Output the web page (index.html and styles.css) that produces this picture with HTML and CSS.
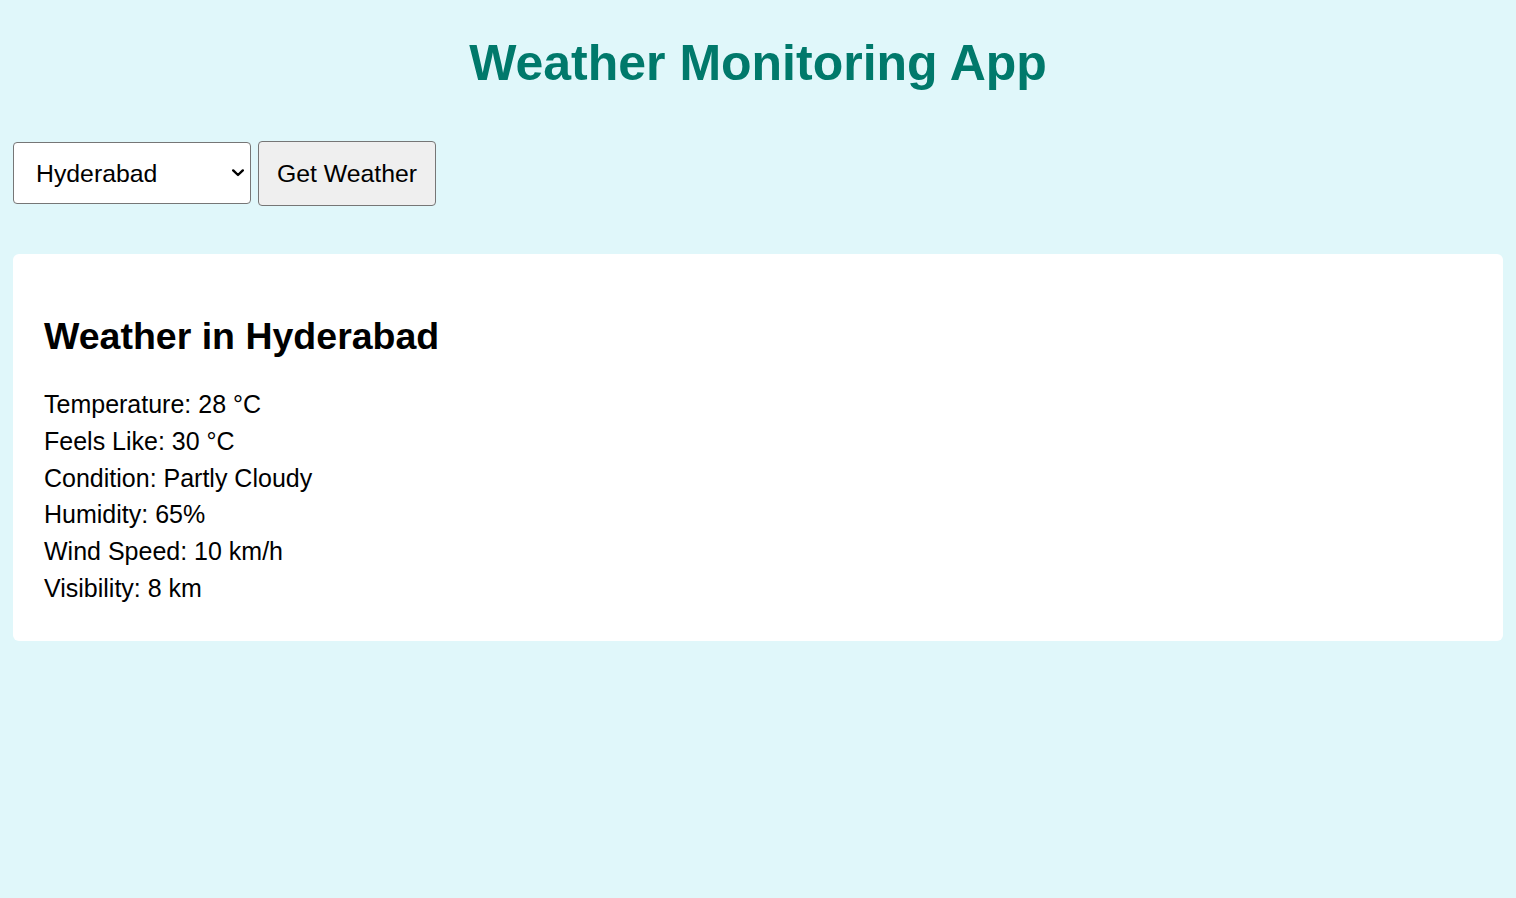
FILE: index.html
```html
<!DOCTYPE html>
<html lang="en">
<head>
<meta charset="utf-8">
<title>Weather Monitoring App</title>
<link rel="stylesheet" href="styles.css">
</head>
<body>
  <h1 class="title">Weather Monitoring App</h1>
  <div class="controls">
    <div class="select-wrap">
      <select class="city-select">
        <option selected>Hyderabad</option>
        <option>Delhi</option>
        <option>Mumbai</option>
        <option>Chennai</option>
        <option>Bangalore</option>
      </select>
      <svg class="chevron" width="12" height="8" viewBox="0 0 12 8" aria-hidden="true">
        <path d="M1.2 1.4 L6 6 L10.8 1.4" fill="none" stroke="#000" stroke-width="2.4" stroke-linecap="round" stroke-linejoin="round"/>
      </svg>
    </div>
    <button class="get-btn" type="button">Get Weather</button>
  </div>
  <div class="card">
    <h2 class="card-title">Weather in Hyderabad</h2>
    <div class="line">Temperature: 28 °C</div>
    <div class="line">Feels Like: 30 °C</div>
    <div class="line">Condition: Partly Cloudy</div>
    <div class="line">Humidity: 65%</div>
    <div class="line">Wind Speed: 10 km/h</div>
    <div class="line">Visibility: 8 km</div>
  </div>
</body>
</html>
```

FILE: styles.css
```css
html, body {
  margin: 0;
  padding: 0;
}
body {
  background: #e0f7fa;
  font-family: "Liberation Sans", Arial, sans-serif;
  font-size: 25px;
  color: #000;
  padding: 0 13px;
  min-height: 898px;
  box-sizing: border-box;
}
.title {
  margin: 0;
  padding-top: 35px;
  font-size: 50px;
  font-weight: bold;
  color: #00796b;
  text-align: center;
  line-height: 57px;
}
.controls {
  display: flex;
  align-items: flex-start;
  gap: 7px;
  margin-top: 49px;
}
.select-wrap {
  position: relative;
  display: flex;
  margin-top: 1px;
}
.city-select {
  appearance: none;
  -webkit-appearance: none;
  width: 238px;
  height: 62px;
  box-sizing: border-box;
  border: 1px solid #767676;
  border-radius: 4px;
  background: #fff;
  font-family: "Liberation Sans", Arial, sans-serif;
  font-size: 24.8px;
  color: #000;
  padding: 0 0 0 22px;
  margin: 0;
}
.chevron {
  position: absolute;
  left: 219px;
  top: 27px;
  pointer-events: none;
}
.get-btn {
  width: 178px;
  height: 65px;
  box-sizing: border-box;
  border: 1px solid #767676;
  border-radius: 4px;
  background: #efefef;
  font-family: "Liberation Sans", Arial, sans-serif;
  font-size: 24.8px;
  color: #000;
  padding: 0;
  margin: 0;
}
.card {
  margin-top: 48px;
  background: #fff;
  border-radius: 6px;
  padding: 31px 31px 34px;
}
.card-title {
  margin: 30px 0 29px;
  font-size: 37.5px;
  font-weight: bold;
  line-height: 42px;
}
.line {
  line-height: 36.8px;
}
```
